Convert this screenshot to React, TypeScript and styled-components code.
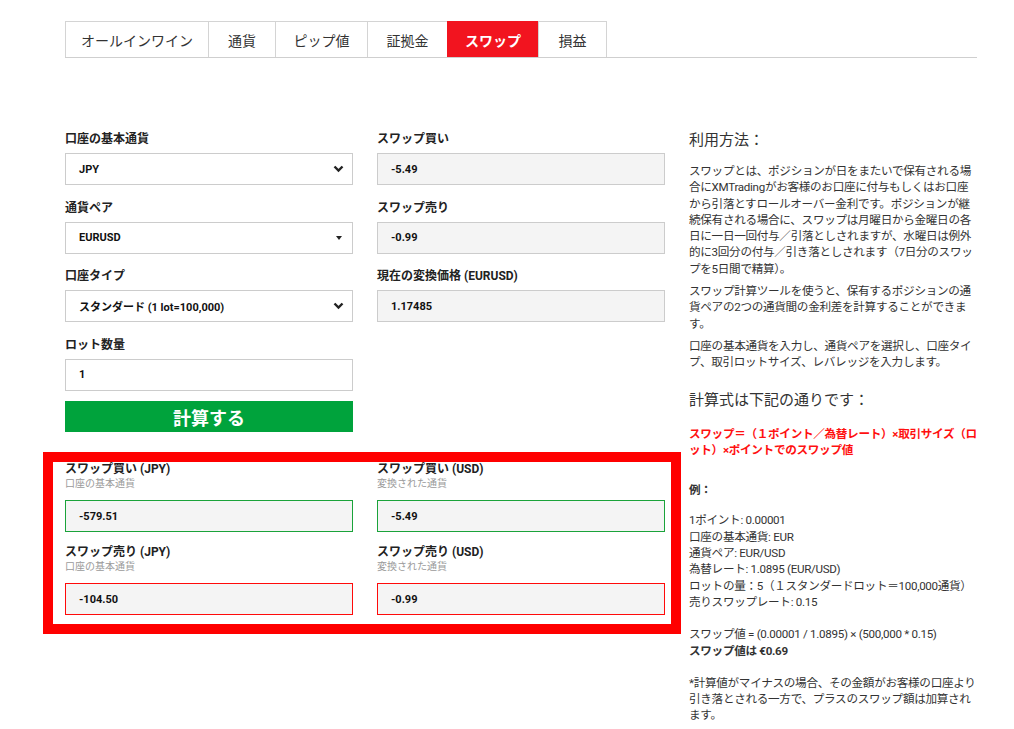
import React from "react";
import styled, { createGlobalStyle } from "styled-components";

const GlobalStyle = createGlobalStyle`
  html, body {
    margin: 0;
    padding: 0;
    background: #fff;
  }
  body {
    font-family: Roboto, "Noto Sans CJK JP", sans-serif;
    color: #333;
  }
`;

const Page = styled.div`
  width: 912px;
  padding: 21px 0 0 65px;
`;

const TabBar = styled.div`
  display: flex;
  border-bottom: 1px solid #cfcfcf;
`;

const Tab = styled.div<{ $w: number; $active?: boolean }>`
  width: ${(p) => p.$w}px;
  height: 36px;
  box-sizing: border-box;
  display: flex;
  align-items: center;
  justify-content: center;
  border: 1px solid #d4d4d4;
  border-bottom: none;
  margin-left: -1px;
  &:first-child {
    margin-left: 0;
  }
  font-size: 14px;
  color: ${(p) => (p.$active ? "#fff" : "#333")};
  font-weight: ${(p) => (p.$active ? 700 : 400)};
  background: ${(p) => (p.$active ? "#f2141f" : "#fff")};
  border-color: ${(p) => (p.$active ? "#f2141f" : "#d4d4d4")};
`;

const Main = styled.div`
  display: grid;
  grid-template-columns: 600px 288px;
  column-gap: 24px;
  margin-top: 72px;
`;

const FormGrid = styled.div`
  display: grid;
  grid-template-columns: 288px 288px;
  column-gap: 24px;
  align-content: start;
`;

const Field = styled.div`
  margin-bottom: 13.5px;
`;

const Label = styled.div`
  font-size: 12px;
  font-weight: 700;
  line-height: 18px;
  height: 18px;
  margin-bottom: 5px;
  color: #222;
`;

const Box = styled.div<{ $readonly?: boolean }>`
  height: 32px;
  box-sizing: border-box;
  border: 1px solid #cccccc;
  background: ${(p) => (p.$readonly ? "#f4f4f4" : "#fff")};
  display: flex;
  align-items: center;
  justify-content: space-between;
  padding: 0 8px 0 13px;
  font-size: 11px;
  font-weight: 700;
  color: #111;
`;

const Arrow = styled.span<{ $inset?: number }>`
  display: flex;
  align-items: center;
  margin-right: ${(p) => p.$inset ?? 0}px;
`;

const CalcButton = styled.button`
  grid-column: 1;
  height: 31px;
  border: none;
  background: #00a33c;
  color: #fff;
  font-family: inherit;
  font-size: 18px;
  font-weight: 700;
  padding: 0;
  margin-top: -3px;
  cursor: pointer;
`;

const ResultFrame = styled.div`
  grid-column: 1 / span 2;
  margin: 20px 0 0 -22px;
  width: 638px;
  box-sizing: border-box;
  border: 10px solid #ff0000;
  padding: 0 6px 9px 12px;
  display: grid;
  grid-template-columns: 288px 288px;
  column-gap: 24px;
`;

const ResultField = styled.div<{ $first?: boolean }>`
  margin-top: ${(p) => (p.$first ? 0 : 13)}px;
`;

const ResultLabel = styled.div`
  font-size: 12px;
  font-weight: 700;
  line-height: 14px;
  color: #222;
`;

const SubLabel = styled.div`
  font-size: 10px;
  line-height: 15px;
  color: #9a9a9a;
  margin-bottom: 9px;
`;

const ResultBox = styled(Box)<{ $tone: "up" | "down" }>`
  background: #f4f4f4;
  border-color: ${(p) => (p.$tone === "up" ? "#1aa33a" : "#ff0a0a")};
`;

const Info = styled.div`
  font-size: 11.6px;
  letter-spacing: -0.3px;
  line-height: 16.3px;
  color: #333;
`;

const InfoTitle = styled.div<{ $gap: number; $after: number }>`
  font-size: 15px;
  line-height: 20px;
  letter-spacing: 0;
  margin-top: ${(p) => p.$gap}px;
  margin-bottom: ${(p) => p.$after}px;
  color: #333;
`;

const Para = styled.p`
  margin: 0 0 6px;
`;

const Formula = styled.p`
  margin: 0;
  color: #ff1010;
  font-weight: 700;
`;

const Block = styled.div<{ $gap: number }>`
  margin-top: ${(p) => p.$gap}px;
`;

const Strong = styled.div`
  font-weight: 700;
`;

const Chevron = () => (
  <svg width="11" height="8" viewBox="0 0 11 8">
    <path d="M1.5 1.5 L5.5 5.5 L9.5 1.5" fill="none" stroke="#222" strokeWidth="2.4" />
  </svg>
);

const Caret = () => (
  <svg width="6" height="4" viewBox="0 0 6 4">
    <path d="M0 0 L6 0 L3 4 Z" fill="#222" />
  </svg>
);

const tabs = [
  { name: "オールインワイン", w: 144 },
  { name: "通貨", w: 68 },
  { name: "ピップ値", w: 93 },
  { name: "証拠金", w: 81 },
  { name: "スワップ", w: 92, active: true },
  { name: "損益", w: 69 },
];

const results = [
  { label: "スワップ買い (JPY)", sub: "口座の基本通貨", value: "-579.51", tone: "up" as const },
  { label: "スワップ買い (USD)", sub: "変換された通貨", value: "-5.49", tone: "up" as const },
  { label: "スワップ売り (JPY)", sub: "口座の基本通貨", value: "-104.50", tone: "down" as const },
  { label: "スワップ売り (USD)", sub: "変換された通貨", value: "-0.99", tone: "down" as const },
];

export default function App() {
  return (
    <>
      <GlobalStyle />
      <Page>
        <TabBar>
          {tabs.map((t) => (
            <Tab key={t.name} $w={t.w} $active={t.active}>
              {t.name}
            </Tab>
          ))}
        </TabBar>
        <Main>
          <FormGrid>
            <Field>
              <Label>口座の基本通貨</Label>
              <Box>
                JPY
                <Arrow>
                  <Chevron />
                </Arrow>
              </Box>
            </Field>
            <Field>
              <Label>スワップ買い</Label>
              <Box $readonly>-5.49</Box>
            </Field>
            <Field>
              <Label>通貨ペア</Label>
              <Box>
                EURUSD
                <Arrow $inset={2}>
                  <Caret />
                </Arrow>
              </Box>
            </Field>
            <Field>
              <Label>スワップ売り</Label>
              <Box $readonly>-0.99</Box>
            </Field>
            <Field>
              <Label>口座タイプ</Label>
              <Box>
                スタンダード (1 lot=100,000)
                <Arrow>
                  <Chevron />
                </Arrow>
              </Box>
            </Field>
            <Field>
              <Label>現在の変換価格 (EURUSD)</Label>
              <Box $readonly>1.17485</Box>
            </Field>
            <Field>
              <Label>ロット数量</Label>
              <Box>1</Box>
            </Field>
            <div />
            <CalcButton>計算する</CalcButton>
            <ResultFrame>
              {results.map((r, i) => (
                <ResultField key={r.label} $first={i < 2}>
                  <ResultLabel>{r.label}</ResultLabel>
                  <SubLabel>{r.sub}</SubLabel>
                  <ResultBox $tone={r.tone}>{r.value}</ResultBox>
                </ResultField>
              ))}
            </ResultFrame>
          </FormGrid>
          <Info>
            <InfoTitle $gap={0} $after={13}>利用方法：</InfoTitle>
            <Para>
              スワップとは、ポジションが日をまたいで保有される場合にXMTradingがお客様のお口座に付与もしくはお口座から引落とすロールオーバー金利です。ポジションが継続保有される場合に、スワップは月曜日から金曜日の各日に一日一回付与／引落としされますが、水曜日は例外的に3回分の付与／引き落としされます（7日分のスワップを5日間で精算）。
            </Para>
            <Para>
              スワップ計算ツールを使うと、保有するポジションの通貨ペアの2つの通貨間の金利差を計算することができます。
            </Para>
            <Para>
              口座の基本通貨を入力し、通貨ペアを選択し、口座タイプ、取引ロットサイズ、レバレッジを入力します。
            </Para>
            <InfoTitle $gap={19} $after={16}>計算式は下記の通りです：</InfoTitle>
            <Formula>
              スワップ＝（１ポイント／為替レート）×取引サイズ（ロット）×ポイントでのスワップ値
            </Formula>
            <Block $gap={24}>
              <Strong>例：</Strong>
            </Block>
            <Block $gap={14}>
              <div>1ポイント: 0.00001</div>
              <div>口座の基本通貨: EUR</div>
              <div>通貨ペア: EUR/USD</div>
              <div>為替レート: 1.0895 (EUR/USD)</div>
              <div>ロットの量：5（１スタンダードロット＝100,000通貨）</div>
              <div>売りスワップレート: 0.15</div>
            </Block>
            <Block $gap={16}>
              <div>スワップ値 = (0.00001 / 1.0895) × (500,000 * 0.15)</div>
              <Strong>スワップ値は €0.69</Strong>
            </Block>
            <Block $gap={16}>
              *計算値がマイナスの場合、その金額がお客様の口座より引き落とされる一方で、プラスのスワップ額は加算されます。
            </Block>
          </Info>
        </Main>
      </Page>
    </>
  );
}
